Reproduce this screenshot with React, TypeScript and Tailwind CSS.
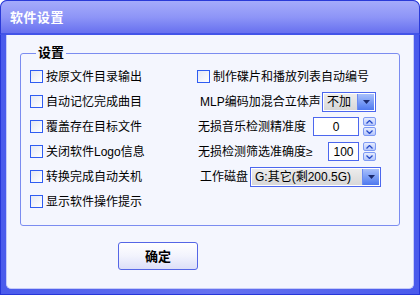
import React from 'react'

const leftItems = [
  '按原文件目录输出',
  '自动记忆完成曲目',
  '覆盖存在目标文件',
  '关闭软件Logo信息',
  '转换完成自动关机',
  '显示软件操作提示',
]

function CheckBox() {
  return (
    <span className="inline-block w-[13px] h-[13px] shrink-0 border border-[#2f5df2] bg-gradient-to-br from-[#e4e8f4] to-white" />
  )
}

function DropButton() {
  return (
    <span className="flex items-center justify-center w-[17px] h-full shrink-0 border-l border-[#6b8bf2] bg-gradient-to-b from-[#a9c0fb] to-[#4f78ee]">
      <svg width="7" height="4" viewBox="0 0 7 4">
        <path d="M0 0h7L3.5 4z" fill="#1b2a6e" />
      </svg>
    </span>
  )
}

function Combo({ text, width }: { text: string; width: string }) {
  return (
    <div className={`flex h-[20px] ${width} border border-[#4c67ee] bg-white p-[1px]`}>
      <span className="flex-1 flex items-center px-[3px] bg-gradient-to-b from-[#ececec] to-[#d8d8d8] text-[12px] leading-none whitespace-nowrap overflow-hidden">
        {text}
      </span>
      <DropButton />
    </div>
  )
}

function Spin() {
  return (
    <div className="flex flex-col w-[13px] h-[19px] gap-[1px]">
      {[0, 1].map(i => (
        <span
          key={i}
          className="flex-1 flex items-center justify-center rounded-[2px] border border-[#7e9af4] bg-gradient-to-b from-[#e6ecfe] to-[#b5c6fb]"
        >
          <svg width="7" height="4" viewBox="0 0 7 4">
            <path d={i === 0 ? 'M0.5 3.5L3.5 0.5L6.5 3.5' : 'M0.5 0.5L3.5 3.5L6.5 0.5'} stroke="#2449c8" strokeWidth="1.3" fill="none" />
          </svg>
        </span>
      ))}
    </div>
  )
}

export default function App() {
  return (
    <div className="w-[420px] h-[295px] flex flex-col bg-[#3445e4] rounded-t-[7px] overflow-hidden font-['Liberation_Sans','Noto_Sans_CJK_SC',sans-serif] text-black">
      {/* Title bar */}
      <div className="h-[35px] shrink-0 flex items-center pl-[9px] border-t border-x border-[#2a3ad8] rounded-t-[7px] bg-gradient-to-b from-[#a5abfb] via-[#8e95f7] to-[#6870ef] border-b-2 border-b-[#4354e8]">
        <span className="text-white font-bold text-[13px] leading-none tracking-[0.5px]">软件设置</span>
      </div>

      {/* Body */}
      <div className="flex-1 flex bg-gradient-to-r from-[#4a5bec] via-[#6672f0] to-[#4a5bec] px-[5px] pb-[5px] border-x border-b border-[#2636d8]">
        <div className="flex-1 flex flex-col bg-[#f4f6fe] rounded-b-[5px] border border-t-0 border-[#c5cbf9] px-[13px] pt-[11px]">
          <fieldset className="h-[180px] border border-[#7b8cf0] rounded-[3px] pl-[9px] pr-[8px] pt-[4px]">
            <legend className="ml-[6px] px-[2px] font-bold text-[13px] leading-[14px]">设置</legend>
            <div className="grid grid-cols-[167px_1fr] grid-rows-[repeat(6,25px)] text-[12px] leading-none">
              {/* Left column */}
              {leftItems.map((t, i) => (
                <div key={t} className="flex items-center gap-[3px]" style={{ gridColumn: 1, gridRow: i + 1 }}>
                  <CheckBox />
                  <span className="whitespace-nowrap">{t}</span>
                </div>
              ))}

              {/* Right column */}
              <div className="col-start-2 row-start-1 flex items-center gap-[3px]">
                <CheckBox />
                <span className="whitespace-nowrap">制作碟片和播放列表自动编号</span>
              </div>
              <div className="col-start-2 row-start-2 flex items-center pl-[3px]">
                <span className="whitespace-nowrap w-[122px]">MLP编码加混合立体声</span>
                <Combo text="不加" width="w-[54px]" />
              </div>
              <div className="col-start-2 row-start-3 flex items-center pl-[1px]">
                <span className="whitespace-nowrap w-[115px]">无损音乐检测精准度</span>
                <div className="w-[46px] h-[19px] border border-[#4c67ee] bg-white flex items-center justify-center mr-[4px]">0</div>
                <Spin />
              </div>
              <div className="col-start-2 row-start-4 flex items-center pl-[1px]">
                <span className="whitespace-nowrap w-[130px]">无损检测筛选准确度≥</span>
                <div className="w-[31px] h-[19px] border border-[#4c67ee] bg-white flex items-center justify-center mr-[4px]">100</div>
                <Spin />
              </div>
              <div className="col-start-2 row-start-5 flex items-center pl-[3px]">
                <span className="whitespace-nowrap w-[50px]">工作磁盘</span>
                <Combo text="G:其它(剩200.5G)" width="w-[131px]" />
              </div>
            </div>
          </fieldset>

          <button className="mt-[16px] ml-[98px] w-[80px] h-[28px] rounded-[3px] border border-[#5566e6] bg-gradient-to-b from-white via-[#f2f3fd] to-[#dcdff8] font-bold text-[13px] leading-none">
            确定
          </button>
        </div>
      </div>
    </div>
  )
}
